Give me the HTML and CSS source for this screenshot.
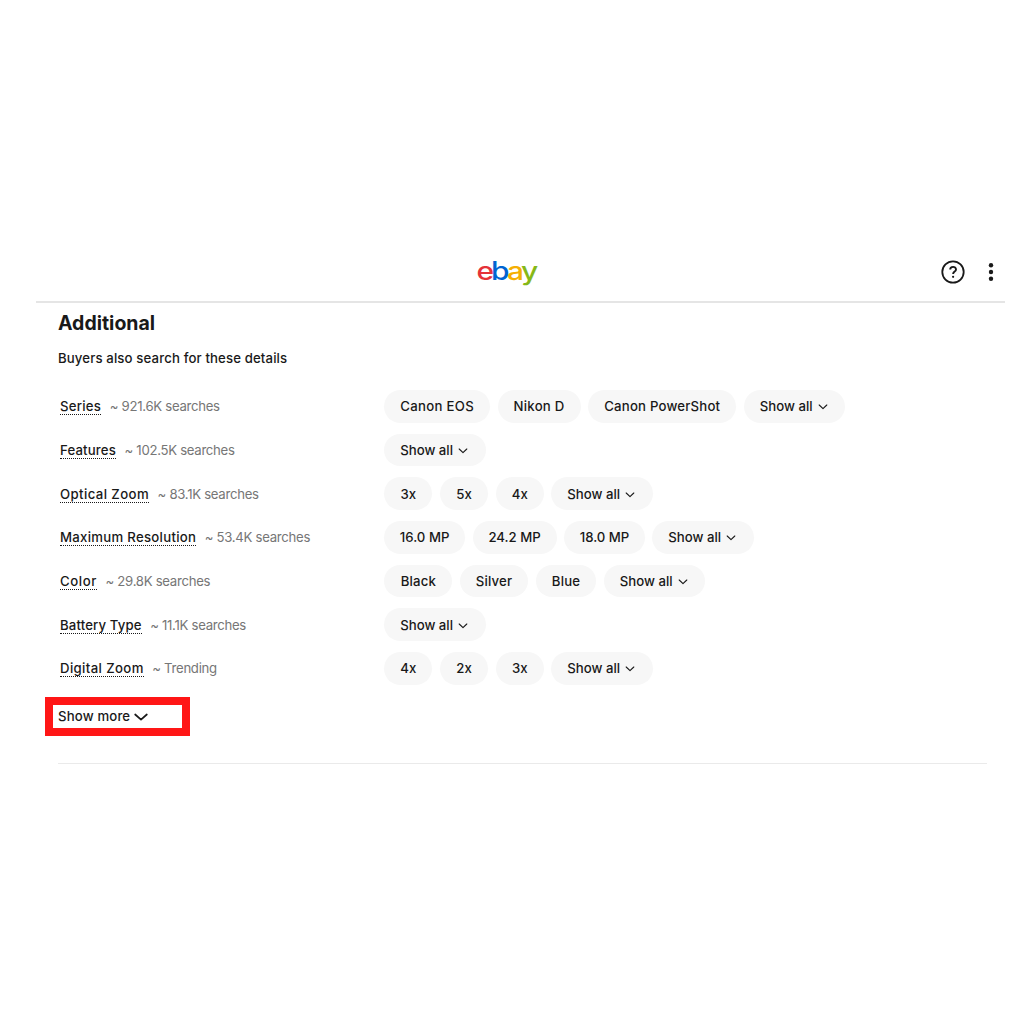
FILE: index.html
```html
<!DOCTYPE html>
<html lang="en">
<head>
  <meta charset="UTF-8" />
  <meta name="viewport" content="width=device-width, initial-scale=1.0" />
  <title>Additional details | eBay</title>
  <link rel="stylesheet" href="styles.css">
</head>
<body>
  <svg class="sprite" width="0" height="0">
    <symbol id="chevron" viewBox="0 0 10 6">
      <path d="M1.2 1 L5 4.6 L8.8 1" fill="none" stroke="currentColor" stroke-width="1.1" stroke-linecap="round" stroke-linejoin="round" />
    </symbol>
  </svg>

  <header class="header">
    <svg class="logo" width="64" height="32" viewBox="0 0 64 32" role="img" aria-label="ebay">
      <g transform="scale(1.17 1)">
        <text class="logo-e" x="0.4" y="24.4">e</text>
        <text class="logo-b" x="12.9" y="24.4">b</text>
        <text class="logo-a" x="26.6" y="24.4">a</text>
        <text class="logo-y" x="38.4" y="24.4">y</text>
      </g>
    </svg>
    <div class="header-actions">
      <svg width="24" height="24" viewBox="0 0 24 24">
        <circle cx="12" cy="12" r="10.7" fill="none" stroke="#191919" stroke-width="1.8" />
        <path d="M9.2 9.6 C9.2 6 15 6.1 15 9.4 C15 11.6 12.1 11.5 12.1 14" fill="none" stroke="#191919" stroke-width="1.9" />
        <circle cx="12.1" cy="16.8" r="1.1" fill="#191919" />
      </svg>
      <svg width="6" height="20" viewBox="0 0 6 20">
        <circle cx="3" cy="3.3" r="2.2" fill="#191919" />
        <circle cx="3" cy="10" r="2.2" fill="#191919" />
        <circle cx="3" cy="16.7" r="2.2" fill="#191919" />
      </svg>
    </div>
  </header>

  <main class="main">
    <h1>Additional</h1>
    <p class="subtitle">Buyers also search for these details</p>

    <div class="detail-list">
      <div class="row">
        <div class="label"><a class="name series">Series</a><span class="count">~ 921.6K searches</span></div>
        <button class="pill eos">Canon EOS</button>
        <button class="pill nikon">Nikon D</button>
        <button class="pill powershot">Canon PowerShot</button>
        <button class="pill all">Show all <svg class="chevron"><use href="#chevron" /></svg></button>
      </div>
      <div class="row">
        <div class="label"><a class="name features">Features</a><span class="count">~ 102.5K searches</span></div>
        <button class="pill all">Show all <svg class="chevron"><use href="#chevron" /></svg></button>
      </div>
      <div class="row">
        <div class="label"><a class="name optical">Optical Zoom</a><span class="count">~ 83.1K searches</span></div>
        <button class="pill short">3x</button>
        <button class="pill short">5x</button>
        <button class="pill short">4x</button>
        <button class="pill all">Show all <svg class="chevron"><use href="#chevron" /></svg></button>
      </div>
      <div class="row">
        <div class="label"><a class="name resolution">Maximum Resolution</a><span class="count">~ 53.4K searches</span></div>
        <button class="pill mp">16.0 MP</button>
        <button class="pill mp-wide">24.2 MP</button>
        <button class="pill mp">18.0 MP</button>
        <button class="pill all">Show all <svg class="chevron"><use href="#chevron" /></svg></button>
      </div>
      <div class="row">
        <div class="label"><a class="name color">Color</a><span class="count">~ 29.8K searches</span></div>
        <button class="pill black">Black</button>
        <button class="pill black">Silver</button>
        <button class="pill blue">Blue</button>
        <button class="pill all">Show all <svg class="chevron"><use href="#chevron" /></svg></button>
      </div>
      <div class="row">
        <div class="label"><a class="name battery">Battery Type</a><span class="count">~ 11.1K searches</span></div>
        <button class="pill all">Show all <svg class="chevron"><use href="#chevron" /></svg></button>
      </div>
      <div class="row">
        <div class="label"><a class="name digital">Digital Zoom</a><span class="count">~ Trending</span></div>
        <button class="pill short">4x</button>
        <button class="pill short">2x</button>
        <button class="pill short">3x</button>
        <button class="pill all">Show all <svg class="chevron"><use href="#chevron" /></svg></button>
      </div>
    </div>

    <button class="show-more">Show more
      <svg width="14" height="9" viewBox="0 0 14 9">
        <path d="M1.2 2.5 L7 7.7 L12.8 2.5" fill="none" stroke="#191919" stroke-width="1.7" stroke-linecap="round" stroke-linejoin="round" />
      </svg>
    </button>
    <hr class="divider">
  </main>
</body>
</html>
```
FILE: styles.css
```css
* {
  box-sizing: border-box;
}

body {
  margin: 0;
  padding: 242px 19px 0 36px;
  background: #fff;
  color: #191919;
  font-family: Inter, "Liberation Sans", sans-serif;
  font-size: 13.2px;
}

button {
  font: inherit;
  color: inherit;
  border: none;
  cursor: pointer;
}

.sprite {
  display: block;
}

.header {
  display: grid;
  grid-template-columns: 1fr 64px 1fr;
  align-items: center;
  height: 61px;
  padding: 0 11.5px 0 0;
  margin-bottom: 7px;
  border-bottom: 2px solid #e5e5e5;
}

.logo {
  grid-column: 2;
  font-size: 25.6px;
  font-weight: 550;
  margin-left: -7px;
}

.logo-e { fill: #e53238; }
.logo-b { fill: #0064d2; }
.logo-a { fill: #f5af02; }
.logo-y { fill: #86b817; }

.header-actions {
  display: flex;
  justify-content: flex-end;
  align-items: center;
  gap: 23px;
}

.main {
  padding: 0 18px 0 22px;
}

h1 {
  margin: 0;
  padding-top: 1px;
  font-size: 19.5px;
  font-weight: 650;
  line-height: 24px;
}

.subtitle {
  margin: 13px 0 22px;
  line-height: 20px;
  font-weight: 450;
  letter-spacing: 0.13px;
}

.detail-list {
  display: grid;
  gap: 11.2px;
}

.row {
  display: flex;
  align-items: center;
  gap: 7.7px;
  height: 32.5px;
}

.label {
  display: flex;
  align-items: center;
  gap: 8.5px;
  width: 318.7px;
  padding-left: 2px;
  white-space: nowrap;
}

.name {
  font-weight: 500;
  line-height: 15px;
  border-bottom: 1.5px dotted #191919;
  margin-top: 2px;
}

.series { letter-spacing: 0.25px; }
.features { letter-spacing: 0.15px; }
.optical { letter-spacing: 0.4px; }
.resolution { letter-spacing: 0.28px; }
.color { letter-spacing: 0.6px; }
.battery { letter-spacing: 0.13px; }
.digital { letter-spacing: 0.37px; }

.count {
  color: #767676;
  letter-spacing: -0.3px;
}

.pill {
  height: 32.5px;
  padding: 0;
  display: flex;
  align-items: center;
  justify-content: center;
  border-radius: 17px;
  background: #f7f7f7;
  font-weight: 500;
  white-space: nowrap;
}

.eos { width: 105.5px; letter-spacing: 0.3px; }
.nikon { width: 83px; letter-spacing: 0.25px; }
.powershot { width: 148px; letter-spacing: 0.2px; }
.short { width: 48px; }
.mp { width: 80.5px; }
.mp-wide { width: 84px; }
.black { width: 68px; letter-spacing: 0.2px; }
.blue { width: 60.5px; letter-spacing: 0.2px; }
.all { width: 101.5px; padding-right: 2px; }

.chevron {
  width: 10px;
  height: 6px;
  margin: 2px 0 0 5px;
}

.show-more {
  display: flex;
  align-items: center;
  gap: 4px;
  width: 145px;
  height: 39px;
  margin: 12px 0 27px -13px;
  padding: 0 5px;
  border: 8px solid #ff1616;
  background: #fff;
  font-weight: 450;
  letter-spacing: 0.15px;
}

.divider {
  height: 1px;
  margin: 0;
  border: none;
  background: #eaeaea;
}
```
